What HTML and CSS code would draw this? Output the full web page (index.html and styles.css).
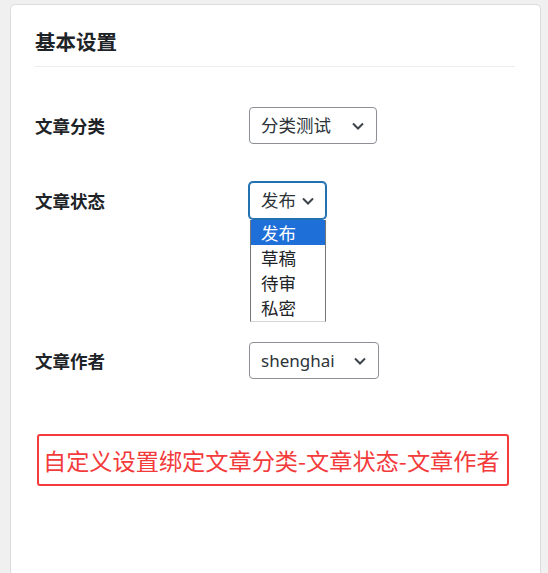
FILE: index.html
```html
<!DOCTYPE html>
<html lang="zh-CN">
<head>
<meta charset="utf-8">
<title>基本设置</title>
<link rel="stylesheet" href="styles.css">
</head>
<body>
<div class="card">
  <h2 class="card-title">基本设置</h2>
  <div class="fields">
    <div class="row">
      <div class="label">文章分类</div>
      <div class="field">
        <div class="select select--cat"><span>分类测试</span><svg class="chev" viewBox="0 0 12 8" width="12" height="8"><path d="M1 1.5 6 6.5 11 1.5" fill="none" stroke="#3c434a" stroke-width="2"/></svg></div>
      </div>
    </div>
    <div class="row row--open">
      <div class="label">文章状态</div>
      <div class="field">
        <div class="select select--status is-focus"><span>发布</span><svg class="chev" viewBox="0 0 12 8" width="12" height="8"><path d="M1 1.5 6 6.5 11 1.5" fill="none" stroke="#3c434a" stroke-width="2"/></svg></div>
        <ul class="listbox">
          <li class="opt is-active">发布</li>
          <li class="opt">草稿</li>
          <li class="opt">待审</li>
          <li class="opt">私密</li>
        </ul>
      </div>
    </div>
    <div class="row">
      <div class="label">文章作者</div>
      <div class="field">
        <div class="select select--author"><span>shenghai</span><svg class="chev" viewBox="0 0 12 8" width="12" height="8"><path d="M1 1.5 6 6.5 11 1.5" fill="none" stroke="#3c434a" stroke-width="2"/></svg></div>
      </div>
    </div>
  </div>
  <div class="note">自定义设置绑定文章分类-文章状态-文章作者</div>
</div>
</body>
</html>
```

FILE: styles.css
```css
html, body {
  margin: 0;
  padding: 0;
  overflow: hidden;
}
body {
  background: #f0f0f1;
  font-family: "Noto Sans", "Noto Sans CJK SC", sans-serif;
  color: #1d2327;
}
.card {
  margin: 4px 7px 0 10px;
  padding: 22px 25px 40px 24px;
  background: #fff;
  border: 1px solid #dcdcde;
  border-radius: 5px;
  min-height: 620px;
}
.card-title {
  margin: 0;
  padding-bottom: 11px;
  font-size: 20.5px;
  line-height: 28px;
  font-weight: 700;
  font-family: "Noto Sans CJK SC", sans-serif;
  border-bottom: 1px solid #ececec;
}
.fields {
  padding-top: 21px;
}
.row {
  display: grid;
  grid-template-columns: 214px 1fr;
  align-items: start;
  padding: 19px 0;
}
.row--open {
  padding-bottom: 1px;
}
.label {
  font-family: "Noto Sans CJK SC", sans-serif;
  font-weight: 700;
  font-size: 17.5px;
  line-height: 37px;
  height: 37px;
}
.field {
  display: flex;
  flex-direction: column;
  align-items: flex-start;
}
.select {
  box-sizing: border-box;
  height: 37px;
  display: flex;
  align-items: center;
  justify-content: space-between;
  padding: 0 12px 0 11px;
  border: 1px solid #8c8f94;
  border-radius: 4px;
  font-size: 17.5px;
  font-family: "Noto Sans", "Noto Sans CJK SC", sans-serif;
  color: #2c3338;
  background: #fff;
}
.select span {
  line-height: 1;
}
.select--cat { width: 128px; }
.select--status { width: 77px; padding-right: 11px; }
.select--author { width: 130px; }
.select--author span { font-size: 17px; }
.is-focus {
  border-color: #2271b1;
  box-shadow: 0 0 0 1px #2271b1;
}
.chev {
  display: block;
  flex: none;
}
.listbox {
  list-style: none;
  margin: 1px 0 0 1px;
  padding: 0 0 1px 0;
  width: 76px;
  box-sizing: border-box;
  border: 1px solid #767676;
  border-top: none;
  border-bottom-color: #d5d5d5;
  background: #fff;
}
.opt {
  height: 25px;
  line-height: 25px;
  padding-left: 10px;
  font-size: 17.5px;
  font-family: "Noto Sans CJK SC", sans-serif;
  color: #1d2327;
}
.opt.is-active {
  background: #1f6fd8;
  color: #fff;
}
.note {
  display: inline-block;
  margin: 36px 0 0 2px;
  padding: 8px 7px 8px 4px;
  border: 2px solid #f33b3b;
  border-radius: 3px;
  color: #f33b3b;
  font-size: 23.2px;
  line-height: 32px;
  font-family: "Noto Sans CJK SC", sans-serif;
}
```
